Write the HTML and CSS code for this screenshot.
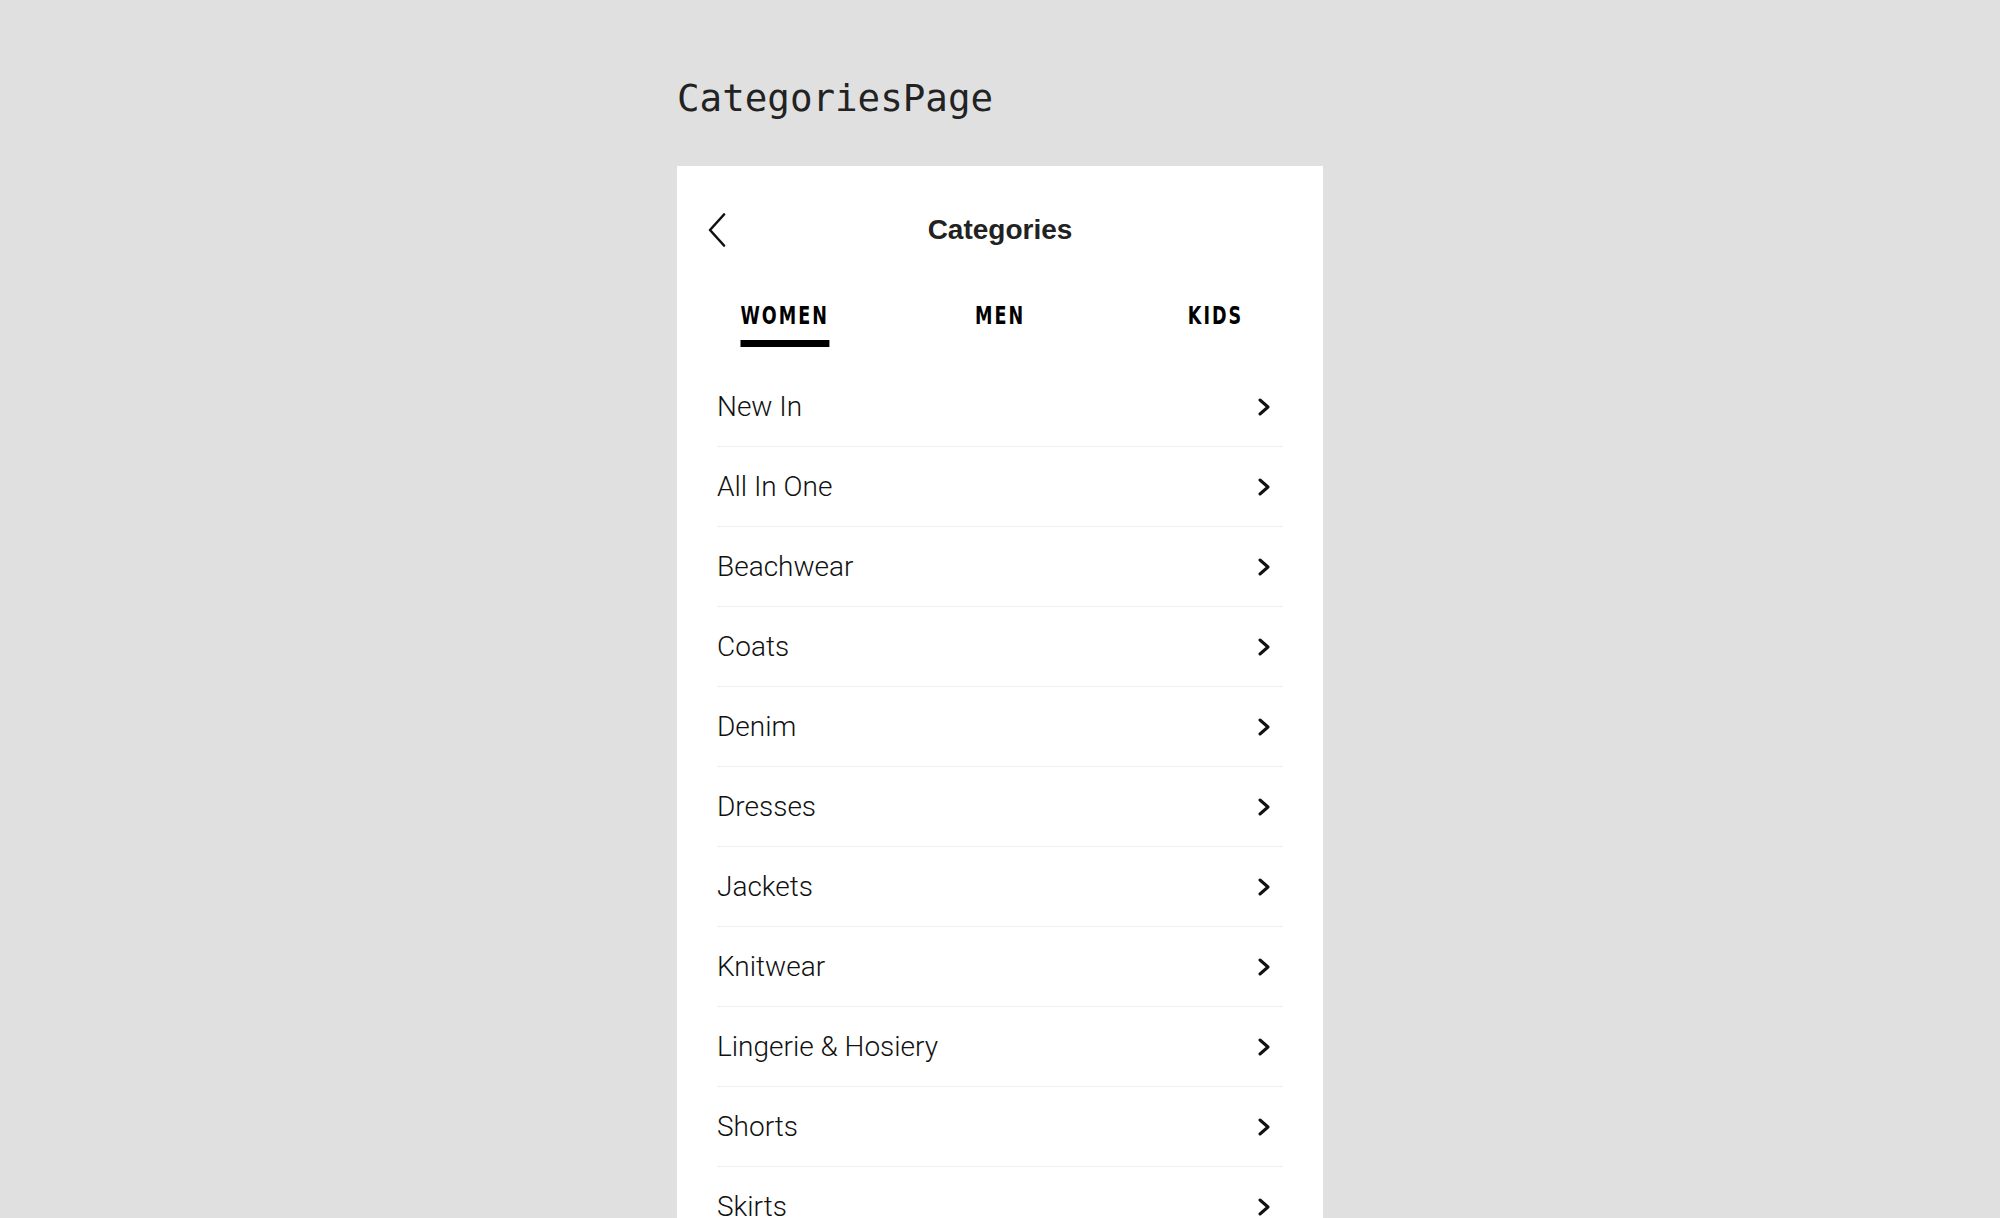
FILE: index.html
```html
<!DOCTYPE html>
<html lang="en">
<head>
<meta charset="utf-8">
<title>CategoriesPage</title>
<link rel="stylesheet" href="styles.css">
</head>
<body>
<div class="page">
  <h1 class="page-title">CategoriesPage</h1>
  <div class="card">
    <div class="header">
      <button class="back" aria-label="Back">
        <svg width="18" height="34" viewBox="0 0 18 34"><polyline points="16,1.5 2,17 16,32.5" fill="none" stroke="#111" stroke-width="2.6" stroke-linecap="round" stroke-linejoin="round"/></svg>
      </button>
      <div class="header-title">Categories</div>
      <div class="header-spacer"></div>
    </div>
    <div class="tabs">
      <div class="tab"><span class="tab-label active">WOMEN</span></div>
      <div class="tab"><span class="tab-label">MEN</span></div>
      <div class="tab"><span class="tab-label">KIDS</span></div>
    </div>
    <ul class="list">
      <li class="row"><span>New In</span><svg class="chev" width="14" height="18" viewBox="0 0 14 18"><polyline points="3,2 11,9 3,16" fill="none" stroke="#111" stroke-width="3" stroke-linecap="round" stroke-linejoin="round"/></svg></li>
      <li class="row"><span>All In One</span><svg class="chev" width="14" height="18" viewBox="0 0 14 18"><polyline points="3,2 11,9 3,16" fill="none" stroke="#111" stroke-width="3" stroke-linecap="round" stroke-linejoin="round"/></svg></li>
      <li class="row"><span>Beachwear</span><svg class="chev" width="14" height="18" viewBox="0 0 14 18"><polyline points="3,2 11,9 3,16" fill="none" stroke="#111" stroke-width="3" stroke-linecap="round" stroke-linejoin="round"/></svg></li>
      <li class="row"><span>Coats</span><svg class="chev" width="14" height="18" viewBox="0 0 14 18"><polyline points="3,2 11,9 3,16" fill="none" stroke="#111" stroke-width="3" stroke-linecap="round" stroke-linejoin="round"/></svg></li>
      <li class="row"><span>Denim</span><svg class="chev" width="14" height="18" viewBox="0 0 14 18"><polyline points="3,2 11,9 3,16" fill="none" stroke="#111" stroke-width="3" stroke-linecap="round" stroke-linejoin="round"/></svg></li>
      <li class="row"><span>Dresses</span><svg class="chev" width="14" height="18" viewBox="0 0 14 18"><polyline points="3,2 11,9 3,16" fill="none" stroke="#111" stroke-width="3" stroke-linecap="round" stroke-linejoin="round"/></svg></li>
      <li class="row"><span>Jackets</span><svg class="chev" width="14" height="18" viewBox="0 0 14 18"><polyline points="3,2 11,9 3,16" fill="none" stroke="#111" stroke-width="3" stroke-linecap="round" stroke-linejoin="round"/></svg></li>
      <li class="row"><span>Knitwear</span><svg class="chev" width="14" height="18" viewBox="0 0 14 18"><polyline points="3,2 11,9 3,16" fill="none" stroke="#111" stroke-width="3" stroke-linecap="round" stroke-linejoin="round"/></svg></li>
      <li class="row"><span>Lingerie &amp; Hosiery</span><svg class="chev" width="14" height="18" viewBox="0 0 14 18"><polyline points="3,2 11,9 3,16" fill="none" stroke="#111" stroke-width="3" stroke-linecap="round" stroke-linejoin="round"/></svg></li>
      <li class="row"><span>Shorts</span><svg class="chev" width="14" height="18" viewBox="0 0 14 18"><polyline points="3,2 11,9 3,16" fill="none" stroke="#111" stroke-width="3" stroke-linecap="round" stroke-linejoin="round"/></svg></li>
      <li class="row"><span>Skirts</span><svg class="chev" width="14" height="18" viewBox="0 0 14 18"><polyline points="3,2 11,9 3,16" fill="none" stroke="#111" stroke-width="3" stroke-linecap="round" stroke-linejoin="round"/></svg></li>
    </ul>
  </div>
</div>
</body>
</html>
```
FILE: styles.css
```css
html, body {
  margin: 0;
  padding: 0;
  background: #e0e0e0;
  overflow: hidden;
}
body {
  padding-top: 79px;
}
.page {
  width: 646px;
  margin: 0 auto;
}
.page-title {
  margin: 0 0 49px 0;
  font-family: "DejaVu Sans Mono", "Liberation Mono", monospace;
  font-weight: normal;
  font-size: 37.5px;
  line-height: 38px;
  color: #222;
  letter-spacing: 0;
}
.card {
  background: #fff;
  padding-top: 32px;
  min-height: 1200px;
}
.header {
  height: 64px;
  display: flex;
  align-items: center;
  padding: 0 31px;
}
.back {
  width: 60px;
  padding: 0;
  border: 0;
  background: none;
  display: flex;
  align-items: center;
}
.header-title {
  flex: 1;
  text-align: center;
  font-family: "Liberation Sans", Arial, sans-serif;
  font-weight: bold;
  font-size: 28px;
  color: #222;
}
.header-spacer {
  width: 60px;
}
.tabs {
  display: grid;
  grid-template-columns: 1fr 1fr 1fr;
  padding-top: 42px;
}
.tab {
  text-align: center;
}
.tab-label {
  display: inline-block;
  font-family: "Liberation Sans Narrow", "DejaVu Sans Condensed", "Liberation Sans", sans-serif;
  font-weight: bold;
  font-size: 25px;
  line-height: 24px;
  letter-spacing: 2.6px;
  color: #000;
  padding-bottom: 12px;
  border-bottom: 7px solid transparent;
  transform: scaleX(0.78);
}
.tab-label.active {
  border-bottom-color: #000;
}
.list {
  list-style: none;
  margin: 20px 40px 0 40px;
  padding: 0;
}
.row {
  height: 79px;
  border-bottom: 1px solid #efefef;
  display: flex;
  align-items: center;
  justify-content: space-between;
  padding-right: 12px;
  font-family: Roboto, "Liberation Sans", sans-serif;
  font-weight: 300;
  font-size: 28px;
  color: #111;
}
.chev {
  display: block;
}
```
